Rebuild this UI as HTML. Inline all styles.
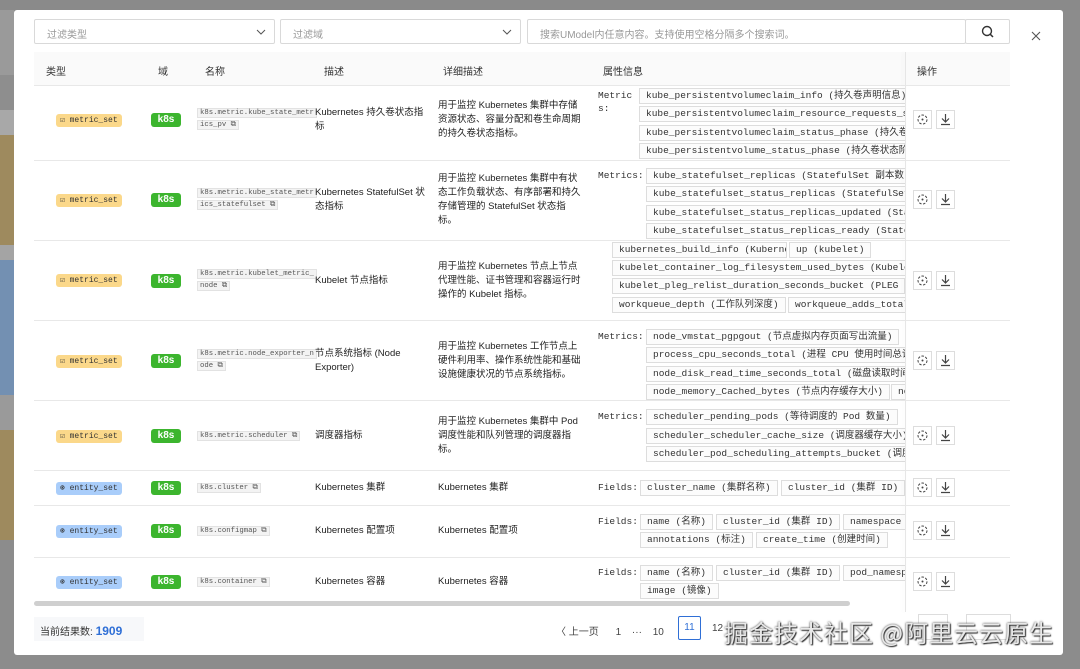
<!DOCTYPE html>
<html><head><meta charset="utf-8"><style>
*{box-sizing:border-box;margin:0;padding:0}
body{width:1080px;height:669px;overflow:hidden;background:#8c8c8c;font-family:"Liberation Sans","Noto Sans CJK SC",sans-serif;position:relative;color:#333}
.a{position:absolute}
.modal{position:absolute;left:14px;top:10px;width:1049px;height:645px;background:#fff;border-radius:3px}
.sel{position:absolute;top:19px;height:25px;border:1px solid #d9d9d9;border-radius:2px;font-size:10px;color:#999;padding:6px 12px}
.th{position:absolute;top:63px;font-size:10px;color:#333}
.hl{position:absolute;left:34px;height:1px;background:#e8e8e8;width:976px}
.badge{position:absolute;left:56px;height:13px;width:66px;border-radius:3px;font:8px "Liberation Mono",monospace;line-height:13px;color:#333;padding-left:4px}
.ms{background:#fbd88a}
.es{background:#a9cdfa}
.k8s{position:absolute;left:151px;width:30px;height:14px;background:#3cb52e;color:#fff;border-radius:3px;font-size:10px;font-weight:bold;text-align:center;line-height:14px}
.code{position:absolute;left:197px;font:7.3px/12px "Liberation Mono",monospace;color:#555}
.code span{background:#f3f3f3;border:1px solid #e2e2e2;padding:0 2px}
.t{position:absolute;font-size:9.5px;line-height:14px;color:#222}
.clip{position:absolute;left:590px;width:315px;overflow:hidden}
.tag{position:absolute;height:16px;border:1px solid #ddd;background:#fcfcfc;font:9.5px/14px "Liberation Mono","Noto Sans CJK SC",monospace;color:#333;padding:0 6px;white-space:nowrap}
.lab{position:absolute;font:9.5px/13px "Liberation Mono",monospace;color:#333}
.ic{position:absolute;width:19px;height:19px;border:1px solid #ddd;background:#fff}
</style></head><body>
<div class="a" style="left:0;top:0;width:14px;height:75px;background:#9a9a9a"></div>
<div class="a" style="left:0;top:75px;width:14px;height:35px;background:#8e8e8e"></div>
<div class="a" style="left:0;top:110px;width:14px;height:25px;background:#a8a8a8"></div>
<div class="a" style="left:0;top:135px;width:14px;height:110px;background:#9e8a5e"></div>
<div class="a" style="left:0;top:245px;width:14px;height:15px;background:#a4a4a4"></div>
<div class="a" style="left:0;top:260px;width:14px;height:135px;background:#7390b2"></div>
<div class="a" style="left:0;top:395px;width:14px;height:35px;background:#9a9a9a"></div>
<div class="a" style="left:0;top:430px;width:14px;height:110px;background:#9e8a5e"></div>
<div class="a" style="left:0;top:0;width:1080px;height:10px;background:#8a8a8a"></div>
<div class="modal"></div>

<div class="sel" style="left:34px;width:241px">过滤类型<svg class="a" style="right:8px;top:9px" width="10" height="6"><path d="M1 1L5 5L9 1" fill="none" stroke="#555"/></svg></div>
<div class="sel" style="left:280px;width:241px">过滤域<svg class="a" style="right:8px;top:9px" width="10" height="6"><path d="M1 1L5 5L9 1" fill="none" stroke="#555"/></svg></div>
<div class="sel" style="left:527px;width:439px">搜索UModel内任意内容。支持使用空格分隔多个搜索词。</div>
<div class="sel" style="left:965px;width:45px;padding:0"><svg width="45" height="25" viewBox="0 0 45 25"><circle cx="21" cy="11" r="4.5" fill="none" stroke="#333" stroke-width="1.4"/><line x1="24.3" y1="14.3" x2="27" y2="17" stroke="#333" stroke-width="1.5"/></svg></div>
<svg class="a" style="left:1030px;top:30px" width="12" height="12"><path d="M2 2L10 10M10 2L2 10" stroke="#555" stroke-width="1.1"/></svg>

<div class="a" style="left:34px;top:52px;width:976px;height:33px;background:#fafafa"></div>
<div class="th" style="left:46px">类型</div><div class="th" style="left:158px">域</div><div class="th" style="left:205px">名称</div><div class="th" style="left:324px">描述</div><div class="th" style="left:443px">详细描述</div><div class="th" style="left:603px">属性信息</div><div class="th" style="left:917px">操作</div>
<div class="hl" style="top:85px"></div><div class="hl" style="top:160px"></div><div class="hl" style="top:240px"></div><div class="hl" style="top:320px"></div><div class="hl" style="top:400px"></div><div class="hl" style="top:470px"></div><div class="hl" style="top:505px"></div><div class="hl" style="top:557px"></div>

<div class="badge ms" style="top:114px">☑ metric_set</div>
<div class="badge ms" style="top:194px">☑ metric_set</div>
<div class="badge ms" style="top:274px">☑ metric_set</div>
<div class="badge ms" style="top:355px">☑ metric_set</div>
<div class="badge ms" style="top:430px">☑ metric_set</div>
<div class="badge es" style="top:482px">⊛ entity_set</div>
<div class="badge es" style="top:525px">⊛ entity_set</div>
<div class="badge es" style="top:576px">⊛ entity_set</div>
<div class="k8s" style="top:113px">k8s</div><div class="k8s" style="top:193px">k8s</div><div class="k8s" style="top:274px">k8s</div><div class="k8s" style="top:354px">k8s</div><div class="k8s" style="top:429px">k8s</div><div class="k8s" style="top:481px">k8s</div><div class="k8s" style="top:524px">k8s</div><div class="k8s" style="top:575px">k8s</div>

<div class="code" style="top:107px"><span>k8s.metric.kube_state_metr</span><br><span>ics_pv ⧉</span></div>
<div class="code" style="top:187px"><span>k8s.metric.kube_state_metr</span><br><span>ics_statefulset ⧉</span></div>
<div class="code" style="top:268px"><span>k8s.metric.kubelet_metric_</span><br><span>node ⧉</span></div>
<div class="code" style="top:348px"><span>k8s.metric.node_exporter_n</span><br><span>ode ⧉</span></div>
<div class="code" style="top:430px"><span>k8s.metric.scheduler ⧉</span></div>
<div class="code" style="top:482px"><span>k8s.cluster ⧉</span></div>
<div class="code" style="top:525px"><span>k8s.configmap ⧉</span></div>
<div class="code" style="top:576px"><span>k8s.container ⧉</span></div>

<div class="t" style="left:315px;top:106px;width:115px">Kubernetes 持久卷状态指标</div>
<div class="t" style="left:315px;top:186px;width:115px">Kubernetes StatefulSet 状态指标</div>
<div class="t" style="left:315px;top:274px;width:115px">Kubelet 节点指标</div>
<div class="t" style="left:315px;top:347px;width:115px">节点系统指标 (Node Exporter)</div>
<div class="t" style="left:315px;top:429px;width:115px">调度器指标</div>
<div class="t" style="left:315px;top:481px">Kubernetes 集群</div>
<div class="t" style="left:315px;top:524px">Kubernetes 配置项</div>
<div class="t" style="left:315px;top:575px">Kubernetes 容器</div>

<div class="t" style="left:438px;top:99px;width:143px">用于监控 Kubernetes 集群中存储资源状态、容量分配和卷生命周期的持久卷状态指标。</div>
<div class="t" style="left:438px;top:172px;width:143px">用于监控 Kubernetes 集群中有状态工作负载状态、有序部署和持久存储管理的 StatefulSet 状态指标。</div>
<div class="t" style="left:438px;top:260px;width:143px">用于监控 Kubernetes 节点上节点代理性能、证书管理和容器运行时操作的 Kubelet 指标。</div>
<div class="t" style="left:438px;top:340px;width:143px">用于监控 Kubernetes 工作节点上硬件利用率、操作系统性能和基础设施健康状况的节点系统指标。</div>
<div class="t" style="left:438px;top:415px;width:143px">用于监控 Kubernetes 集群中 Pod 调度性能和队列管理的调度器指标。</div>
<div class="t" style="left:438px;top:481px">Kubernetes 集群</div>
<div class="t" style="left:438px;top:524px">Kubernetes 配置项</div>
<div class="t" style="left:438px;top:575px">Kubernetes 容器</div>

<div class="clip" style="top:86px;height:514px">
<div class="lab" style="left:8px;top:3px">Metric<br>s:</div>
<div class="tag" style="left:49px;top:2px">kube_persistentvolumeclaim_info (持久卷声明信息)</div>
<div class="tag" style="left:49px;top:20px">kube_persistentvolumeclaim_resource_requests_storage</div>
<div class="tag" style="left:49px;top:39px">kube_persistentvolumeclaim_status_phase (持久卷声明</div>
<div class="tag" style="left:49px;top:57px">kube_persistentvolume_status_phase (持久卷状态阶段)</div>

<div class="lab" style="left:8px;top:83px">Metrics:</div>
<div class="tag" style="left:56px;top:82px">kube_statefulset_replicas (StatefulSet 副本数)</div>
<div class="tag" style="left:56px;top:100px">kube_statefulset_status_replicas (StatefulSet</div>
<div class="tag" style="left:56px;top:119px">kube_statefulset_status_replicas_updated (StatefulSet</div>
<div class="tag" style="left:56px;top:137px">kube_statefulset_status_replicas_ready (StatefulSet</div>

<div class="tag" style="left:22px;top:156px;width:175px;overflow:hidden">kubernetes_build_info (Kubernetes 构建信息)</div>
<div class="tag" style="left:199px;top:156px">up (kubelet)</div>
<div class="tag" style="left:22px;top:174px">kubelet_container_log_filesystem_used_bytes (Kubelet</div>
<div class="tag" style="left:22px;top:192px">kubelet_pleg_relist_duration_seconds_bucket (PLEG</div>
<div class="tag" style="left:22px;top:211px">workqueue_depth (工作队列深度)</div>
<div class="tag" style="left:198px;top:211px">workqueue_adds_total</div>

<div class="lab" style="left:8px;top:244px">Metrics:</div>
<div class="tag" style="left:56px;top:243px">node_vmstat_pgpgout (节点虚拟内存页面写出流量)</div>
<div class="tag" style="left:56px;top:261px">process_cpu_seconds_total (进程 CPU 使用时间总计)</div>
<div class="tag" style="left:56px;top:280px">node_disk_read_time_seconds_total (磁盘读取时间)</div>
<div class="tag" style="left:56px;top:298px">node_memory_Cached_bytes (节点内存缓存大小)</div>
<div class="tag" style="left:301px;top:298px">node</div>

<div class="lab" style="left:8px;top:324px">Metrics:</div>
<div class="tag" style="left:56px;top:323px">scheduler_pending_pods (等待调度的 Pod 数量)</div>
<div class="tag" style="left:56px;top:342px">scheduler_scheduler_cache_size (调度器缓存大小)</div>
<div class="tag" style="left:56px;top:360px">scheduler_pod_scheduling_attempts_bucket (调度</div>

<div class="lab" style="left:8px;top:395px">Fields:</div>
<div class="tag" style="left:50px;top:394px">cluster_name (集群名称)</div>
<div class="tag" style="left:191px;top:394px">cluster_id (集群 ID)</div>

<div class="lab" style="left:8px;top:429px">Fields:</div>
<div class="tag" style="left:50px;top:428px">name (名称)</div>
<div class="tag" style="left:126px;top:428px">cluster_id (集群 ID)</div>
<div class="tag" style="left:253px;top:428px">namespace</div>
<div class="tag" style="left:50px;top:446px">annotations (标注)</div>
<div class="tag" style="left:166px;top:446px">create_time (创建时间)</div>

<div class="lab" style="left:8px;top:480px">Fields:</div>
<div class="tag" style="left:50px;top:479px">name (名称)</div>
<div class="tag" style="left:126px;top:479px">cluster_id (集群 ID)</div>
<div class="tag" style="left:253px;top:479px">pod_namespace</div>
<div class="tag" style="left:50px;top:497px">image (镜像)</div>
</div>

<div class="a" style="left:905px;top:52px;width:1px;height:560px;background:#e6e6e6;box-shadow:-2px 0 4px rgba(0,0,0,.06)"></div>
<div id="acts"></div>
<div class="a" style="left:34px;top:601px;width:816px;height:5px;border-radius:3px;background:#cfcfcf"></div>

<div class="a" style="left:34px;top:617px;width:110px;height:24px;background:#f7f8fa"></div>
<div class="a" style="left:40px;top:623px;font-size:10px;color:#333">当前结果数: <b style="color:#2f6fd6;font-size:12px;font-weight:bold">1909</b></div>
<div class="a" style="left:556px;top:623px;font-size:10px;color:#444;word-spacing:0">〈 上一页 <span style="margin-left:14px">1</span> <span style="margin-left:8px">···</span> <span style="margin-left:8px">10</span></div>
<div class="a" style="left:678px;top:616px;width:23px;height:24px;border:1px solid #2f6fd6;color:#2f6fd6;font-size:10px;text-align:center;line-height:22px;border-radius:2px">11</div>
<div class="a" style="left:712px;top:623px;font-size:10px;color:#444">12</div>
<div class="a" style="left:918px;top:614px;width:30px;height:26px;border:1px solid #ddd"></div>
<div class="a" style="left:966px;top:614px;width:45px;height:26px;border:1px solid #ddd"></div>
<div class="a" style="left:724px;top:617px;font-size:24px;color:#e8e8e8;letter-spacing:1px;text-shadow:0 0 2px #333,1px 1px 1px #333;font-family:'Noto Sans CJK SC',sans-serif;line-height:30px">掘金技术社区 @阿里云云原生</div>

<script>
var ys=[120,200,281,361,436,488,531,582],h='';
ys.forEach(function(y){
h+='<div class="ic" style="left:913px;top:'+(y-10)+'px"><svg width="17" height="17"><circle cx="8.5" cy="8.5" r="4.5" fill="none" stroke="#444" stroke-dasharray="2.5 1.5"/><circle cx="8.5" cy="8.5" r="1" fill="#444"/></svg></div>';
h+='<div class="ic" style="left:936px;top:'+(y-10)+'px"><svg width="17" height="17"><path d="M8.5 3V11M5 7.5L8.5 11L12 7.5M4 13.5H13" fill="none" stroke="#444" stroke-width="1.2"/></svg></div>';
});
document.getElementById('acts').innerHTML=h;
</script>
</body></html>
